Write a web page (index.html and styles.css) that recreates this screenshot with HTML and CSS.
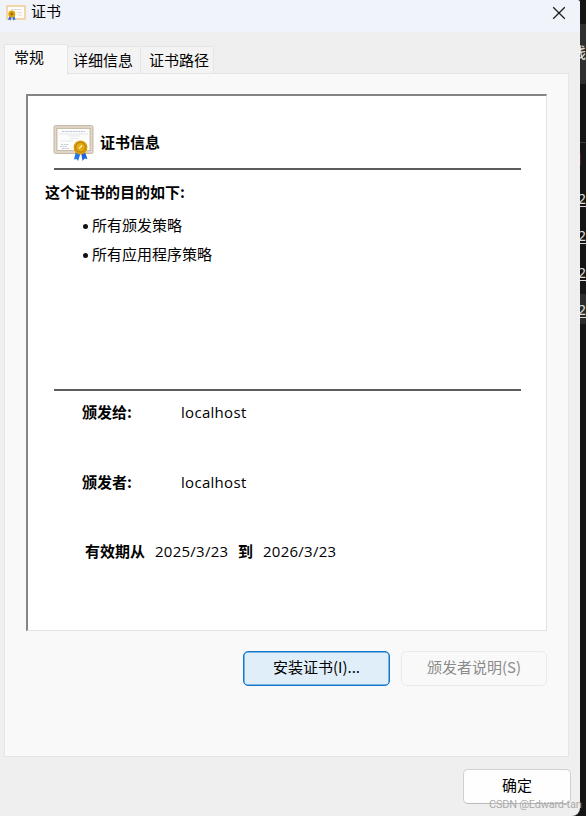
FILE: index.html
```
<!DOCTYPE html>
<html lang="zh-CN">
<head>
<meta charset="utf-8">
<title>证书</title>
<link rel="stylesheet" href="styles.css">
</head>
<body>
<div class="desktop">
  <main class="window">
    <header class="titlebar">
      <svg class="title-icon" viewBox="0 0 20 17">
        <rect x="1" y="1" width="18" height="13" fill="#fffdf7" stroke="#f3d3a4" stroke-width="1.8"/>
        <path d="M5 4.500h10M11 7.500h5M12 10h4" stroke="#d6dadd" stroke-width=".9"/>
        <path d="M3.500 10.500L2 15l1.600-.5.9 1.300 1.300-4zM6.500 11.500l.5 4.300 1-1.300 1.600.3-1.400-4z" fill="#2470e4"/>
        <circle cx="5.800" cy="9" r="3.500" fill="#dda009"/>
        <circle cx="5.800" cy="9" r="1.300" fill="#8f6a10"/>
      </svg>
      <h1 class="title">证书</h1>
      <svg class="close" viewBox="0 0 14 14"><path d="M1.200 1.200l11.600 11.600M12.800 1.200L1.200 12.800" stroke="#1b1b1b" stroke-width="1.250"/></svg>
    </header>
    <nav class="tabs">
      <div class="tab active">常规</div>
      <div class="tab second">详细信息</div>
      <div class="tab third">证书路径</div>
    </nav>
    <section class="page">
      <div class="sheet">
        <div class="heading">
          <svg class="cert" viewBox="0 0 42 38">
            <rect x="1" y="1.500" width="39" height="28" rx="1.500" fill="#d9cebd" stroke="#c9bba7"/>
            <rect x="2.500" y="3" width="36" height="25" fill="none" stroke="#eee6dc" stroke-dasharray="1 1"/>
            <rect x="4" y="4.500" width="33" height="22" fill="#fdfdfc" stroke="#b9ad9c" stroke-width=".7"/>
            <path d="M9 7.500h23" stroke="#b7c1da" stroke-dasharray="2 .7"/>
            <path d="M6 10h29M15 12h12M17 14.500h8M8 17h12" stroke="#d8dbe4" stroke-width=".7"/>
            <path d="M8 20.500h8M7 22.500h7M9 24.500h7" stroke="#b4bac9" stroke-width=".8" stroke-dasharray="2 .6"/>
            <path d="M23 27l-2 8.500 2.500-.5 1.500 2 3-9z" fill="#2378ed"/>
            <path d="M28 28l1.500 9 2-2.500 3 .5-3-8z" fill="#1d63db"/>
            <circle cx="27.500" cy="23.500" r="6.900" fill="#d79b0b"/>
            <circle cx="27.500" cy="23.200" r="4.800" fill="#e2aa14" stroke="#b97e07"/>
            <path d="M26 24.500l3-3" stroke="#fff0b2" stroke-width="1.500"/>
          </svg>
          <h2>证书信息</h2>
        </div>
        <div class="purpose">
          <h3>这个证书的目的如下:</h3>
          <ul>
            <li>所有颁发策略</li>
            <li>所有应用程序策略</li>
          </ul>
        </div>
        <dl class="names">
          <dt>颁发给:</dt><dd>localhost</dd>
          <dt>颁发者:</dt><dd>localhost</dd>
        </dl>
        <p class="validity"><b>有效期从</b><span class="date">2025/3/23</span><b>到</b><span class="date">2026/3/23</span></p>
      </div>
      <div class="actions">
        <button class="install">安装证书(I)...</button>
        <button class="statement" disabled>颁发者说明(S)</button>
      </div>
    </section>
    <footer class="footer"><button class="ok">确定</button></footer>
  </main>
  <aside class="backdrop">
    <div class="message">线</div>
    <div class="rule"></div>
    <div class="mark"></div>
    <div class="lines">
      <span>2</span><span>2</span><span>2</span><span class="current">2</span>
    </div>
  </aside>
  <div class="watermark">CSDN @Edward-tan</div>
</div>
</body>
</html>
```

FILE: styles.css
```
* { box-sizing: border-box; margin: 0; padding: 0; }
body {
  background: #171717;
  color: #000;
  font: 15px/20px "Noto Sans CJK SC", sans-serif;
  overflow: hidden;
}
.desktop { position: relative; display: flex; width: 586px; height: 816px; overflow: hidden; }
.window {
  display: flex;
  flex-direction: column;
  width: 580px;
  height: 816px;
  background: #efefef;
  border-radius: 0 3px 8px 0;
  overflow: hidden;
}
.titlebar { display: flex; height: 32px; padding: 5px 14px 0 6px; background: #f0f3f9; }
.title-icon { width: 20px; height: 17px; }
.title { margin: -4px auto 0 5px; font-size: 15px; font-weight: 400; line-height: 20px; }
.close { width: 14px; height: 14px; margin-top: 1px; }

.tabs { display: flex; align-items: flex-end; height: 42px; padding-left: 4px; }
.tab {
  height: 28px;
  padding: 3px 0 0 5px;
  background: #f3f3f3;
  border: 1px solid #e5e5e5;
  border-left: 0;
  border-bottom: 0;
  white-space: nowrap;
}
.active {
  z-index: 1;
  width: 64px;
  height: 31px;
  margin-bottom: -1px;
  padding: 2px 0 0 9px;
  background: #f9f9f9;
  border-left: 1px solid #e5e5e5;
}
.second { width: 73px; }
.third { width: 73px; padding-left: 8px; }

.page {
  width: 565px;
  height: 684px;
  margin: -1px 0 0 4px;
  padding: 19px 20px 0 21px;
  background: #f9f9f9;
  border: 1px solid #e5e5e5;
}
.sheet {
  width: 521px;
  height: 537px;
  margin-top: 1px;
  padding-left: 17px;
  background: #fff;
  border: 1px solid #e3e3e3;
  border-top: 2px solid #858585;
  border-left: 2px solid #858585;
}
.heading {
  display: flex;
  width: 467px;
  height: 74px;
  margin-left: 9px;
  padding-top: 28px;
  border-bottom: 2px solid #5d5b5e;
}
.cert { width: 42px; height: 38px; margin-left: -1px; }
h2, h3 { font-size: 15px; font-weight: 700; line-height: 20px; }
h2 { margin: 8px 0 0 5px; }
.purpose { height: 219px; padding-top: 12px; }
ul { margin: 13px 0 0 38px; list-style: none; }
li { display: flex; align-items: center; height: 20px; margin-bottom: 9px; }
li::before { content: ""; width: 5px; height: 5px; margin: 2px 4px 0 0; border-radius: 50%; background: #111; }
.names {
  display: grid;
  grid-template-columns: 99px 1fr;
  row-gap: 50px;
  width: 467px;
  margin-left: 9px;
  padding: 11px 0 0 28px;
  border-top: 2px solid #5d5b5e;
}
dt, b { font-weight: 700; }
dd, .date { font-family: "Open Sans", "Noto Sans", sans-serif; }
dd { letter-spacing: .3px; }
.validity { display: flex; margin: 49px 0 0 40px; }
.date { width: 74px; margin: 0 9px 0 10px; font-size: 15px; letter-spacing: .25px; white-space: nowrap; }

.actions { display: flex; gap: 11px; padding: 20px 0 0 217px; }
button {
  height: 35px;
  padding-bottom: 3px;
  border-radius: 5px;
  font: 15px/20px "Noto Sans CJK SC", sans-serif;
  color: #000;
}
.install { width: 147px; background: #e0eef9; border: 1px solid #1378ca; box-shadow: inset 0 0 0 .5px #1378ca; }
.statement { width: 146px; background: #f9f9f9; border: 1px solid #ebebeb; color: #8b8b8b; }
.footer { padding: 12px 0 0 463px; }
.ok { width: 108px; height: 35px; background: #fefefe; border: 1px solid #d0d0d0; border-bottom-color: #bbb; }

.backdrop { width: 6px; height: 816px; overflow: hidden; background: #151515; }
.message { height: 60px; margin-top: 24px; padding-top: 18px; background: #2f2f2f; color: #eee; text-indent: -9px; }
.rule { height: 1px; margin-top: 58px; background: #3c3c3c; }
.mark { width: 1px; height: 12px; margin-top: 10px; background: #4c1d1d; }
.lines { margin-top: 18px; }
.lines span {
  display: block;
  height: 30px;
  margin-bottom: 7px;
  padding-top: 6px;
  color: #ddd;
  font: 14px/20px "Noto Sans", sans-serif;
  text-indent: -2px;
  text-decoration: underline;
  text-underline-offset: 2px;
}
.lines .current { background: #2c2c2c; }
.watermark {
  position: absolute;
  top: 797px;
  left: 489px;
  color: #aaa;
  font: 11px/16px Roboto, sans-serif;
  letter-spacing: -.25px;
  white-space: nowrap;
}
```
